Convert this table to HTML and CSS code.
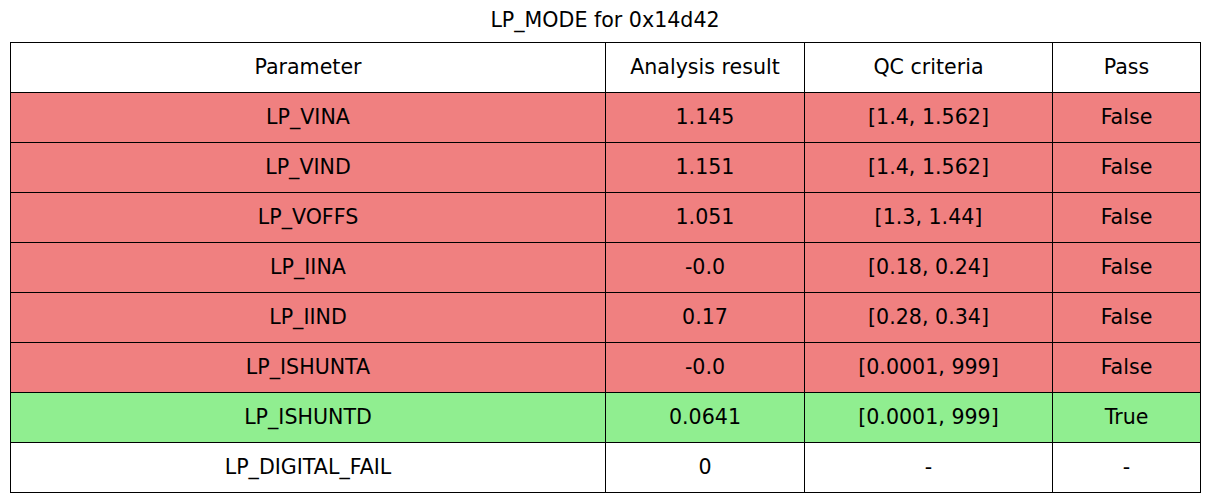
FILE: index.html
```html
<!DOCTYPE html>
<html>
<head>
<meta charset="utf-8">
<link rel="stylesheet" href="styles.css">
</head>
<body>
<div class="title">LP_MODE for 0x14d42</div>
<div class="table">
  <div class="cell">Parameter</div><div class="cell">Analysis result</div><div class="cell">QC criteria</div><div class="cell">Pass</div>
  <div class="cell red">LP_VINA</div><div class="cell red">1.145</div><div class="cell red">[1.4, 1.562]</div><div class="cell red">False</div>
  <div class="cell red">LP_VIND</div><div class="cell red">1.151</div><div class="cell red">[1.4, 1.562]</div><div class="cell red">False</div>
  <div class="cell red">LP_VOFFS</div><div class="cell red">1.051</div><div class="cell red">[1.3, 1.44]</div><div class="cell red">False</div>
  <div class="cell red">LP_IINA</div><div class="cell red">-0.0</div><div class="cell red">[0.18, 0.24]</div><div class="cell red">False</div>
  <div class="cell red">LP_IIND</div><div class="cell red">0.17</div><div class="cell red">[0.28, 0.34]</div><div class="cell red">False</div>
  <div class="cell red">LP_ISHUNTA</div><div class="cell red">-0.0</div><div class="cell red">[0.0001, 999]</div><div class="cell red">False</div>
  <div class="cell green">LP_ISHUNTD</div><div class="cell green">0.0641</div><div class="cell green">[0.0001, 999]</div><div class="cell green">True</div>
  <div class="cell">LP_DIGITAL_FAIL</div><div class="cell">0</div><div class="cell">-</div><div class="cell">-</div>
</div>
</body>
</html>
```
FILE: styles.css
```css
html, body {
  margin: 0;
  padding: 0;
  background: #fff;
}
body {
  font-family: "DejaVu Sans", sans-serif;
  font-size: 20.6px;
  color: #000;
}
.title {
  height: 42px;
  box-sizing: border-box;
  padding-top: 8px;
  line-height: 24px;
  text-align: center;
}
.table {
  margin-left: 10px;
  display: grid;
  grid-template-columns: 595px 199px 248px 148px;
  grid-auto-rows: 50px;
  width: max-content;
  border-left: 1px solid #000;
  border-top: 1px solid #000;
}
.cell {
  box-sizing: border-box;
  border-right: 1px solid #000;
  border-bottom: 1px solid #000;
  display: flex;
  align-items: center;
  justify-content: center;
  padding-bottom: 2px;
  line-height: 24px;
  background: #fff;
}
.red { background: #f08080; }
.green { background: #90ee90; }
```
